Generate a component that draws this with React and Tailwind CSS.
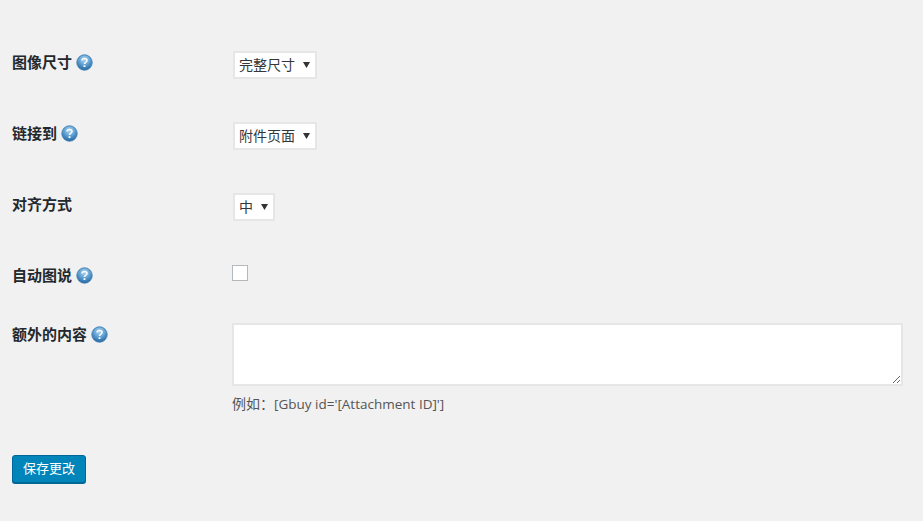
import React from 'react'

const font = { fontFamily: '"Open Sans", "Noto Sans CJK SC", sans-serif' }

const HelpIcon = ({ id }) => (
  <svg width="17" height="17" viewBox="0 0 17 17" className="ml-[4px] shrink-0">
    <defs>
      <radialGradient id={id} cx="50%" cy="30%" r="70%">
        <stop offset="0%" stopColor="#b5d7ee" />
        <stop offset="50%" stopColor="#62a3d6" />
        <stop offset="100%" stopColor="#24649f" />
      </radialGradient>
    </defs>
    <circle cx="8.5" cy="8.5" r="7.7" fill={`url(#${id})`} stroke="#3f7fb4" strokeWidth="0.9" />
    <path d="M6 6.6c0-1.5 1.1-2.2 2.5-2.2s2.5.8 2.5 2c0 1-.6 1.4-1.3 1.9-.7.4-1.2.8-1.2 1.6" fill="none" stroke="#fff" strokeWidth="1.5" />
    <rect x="7.6" y="11.2" width="1.8" height="1.8" fill="#fff" />
  </svg>
)

const Label = ({ text, help }) => (
  <div className="flex w-[220px] shrink-0 items-center text-[15px] font-bold leading-[20px] text-[#23282d]">
    <span>{text}</span>
    {help && <HelpIcon id={help} />}
  </div>
)

const Select = ({ value, width }) => (
  <div className={`relative ${width}`}>
    <select
      defaultValue={value}
      className="h-[28px] w-full appearance-none border-2 border-[#e6e6e6] bg-white pl-[4px] text-sm leading-[24px] text-[#32373c] outline-none"
    >
      <option>{value}</option>
    </select>
    <svg width="7" height="6" viewBox="0 0 7 6" className="pointer-events-none absolute right-[7px] top-[11px]">
      <path d="M0 0h7L3.5 6z" fill="#333" />
    </svg>
  </div>
)

export default function App() {
  return (
    <div className="h-[521px] w-[923px] overflow-hidden bg-[#f1f1f1] pl-[12px] pt-[51px]" style={font}>
      <div className="flex h-[71px] items-start">
        <div className="flex h-[22px] items-center"><Label text="图像尺寸" help="h1" /></div>
        <div className="ml-[1px]"><Select value="完整尺寸" width="w-[84px]" /></div>
      </div>
      <div className="flex h-[71px] items-start">
        <div className="flex h-[22px] items-center"><Label text="链接到" help="h2" /></div>
        <div className="ml-[1px]"><Select value="附件页面" width="w-[84px]" /></div>
      </div>
      <div className="flex h-[71px] items-start">
        <div className="flex h-[22px] items-center"><Label text="对齐方式" /></div>
        <div className="ml-[1px]"><Select value="中" width="w-[42px]" /></div>
      </div>
      <div className="flex h-[59px] items-start">
        <div className="flex h-[22px] items-center"><Label text="自动图说" help="h3" /></div>
        <input type="checkbox" className="mt-[1px] h-[16px] w-[16px] appearance-none border border-[#b4b9be] bg-white" />
      </div>
      <div className="flex items-start">
        <div className="flex h-[22px] items-center"><Label text="额外的内容" help="h4" /></div>
        <div>
          <textarea className="block h-[63px] w-[671px] border-2 border-[#e6e6e6] bg-white outline-none"></textarea>
          <p className="mt-[8px] text-sm leading-[20px] text-[#555]">
            例如：<span className="text-[13.5px]">[Gbuy id='[Attachment ID]']</span>
          </p>
        </div>
      </div>
      <button className="mt-[41px] h-[28px] w-[74px] rounded-[3px] border border-[#006799] bg-[#0085ba] text-[13px] text-white shadow-[0_1px_0_#006799]">
        保存更改
      </button>
    </div>
  )
}
